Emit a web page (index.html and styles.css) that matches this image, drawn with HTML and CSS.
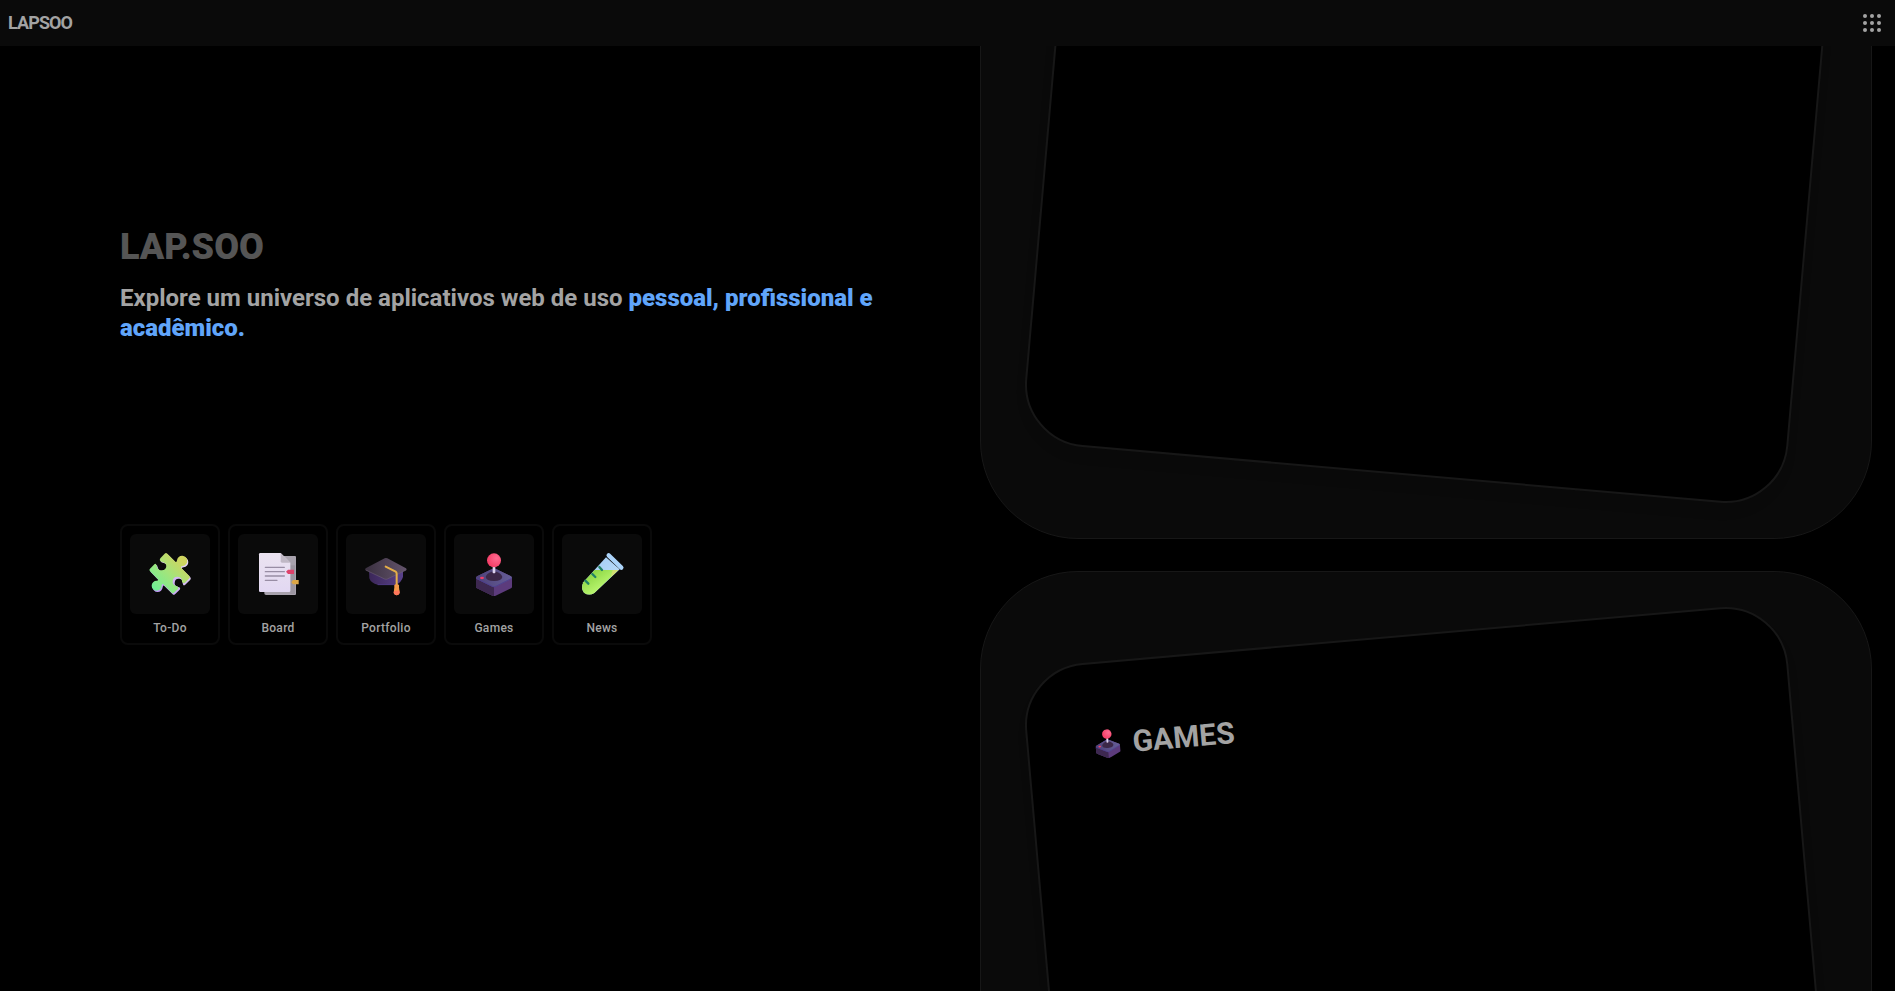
FILE: index.html
```html
<!DOCTYPE html>
<html lang="pt-BR">
<head>
<meta charset="utf-8">
<title>LAPSOO</title>
<link rel="stylesheet" href="styles.css">
</head>
<body>
<svg class="defs" width="0" height="0" aria-hidden="true">
  <defs>
    <linearGradient id="puzzle-fill" x1="0" y1="1" x2="1" y2="0"><stop offset="0" stop-color="#62f29d"/><stop offset=".5" stop-color="#a5e47a"/><stop offset=".8" stop-color="#cfd45f"/><stop offset="1" stop-color="#cfd45f"/></linearGradient>
    <linearGradient id="puzzle-side" x1="0" y1="1" x2="1" y2="0"><stop offset="0" stop-color="#b98cf5"/><stop offset="1" stop-color="#e9e0f0"/></linearGradient>
    <linearGradient id="paper" x1="0" y1="0" x2="0" y2="1"><stop offset="0" stop-color="#ebe3f0"/><stop offset="1" stop-color="#e2d8f2"/></linearGradient>
    <linearGradient id="cap-top" x1="0" y1="0" x2="1" y2="0"><stop offset="0" stop-color="#3a3040"/><stop offset="1" stop-color="#64546c"/></linearGradient>
    <linearGradient id="cap-base" x1="0" y1="0" x2="1" y2="0"><stop offset="0" stop-color="#3b2758"/><stop offset="1" stop-color="#59418a"/></linearGradient>
    <radialGradient id="ball" cx=".68" cy=".35" r=".7"><stop offset="0" stop-color="#ff6a90"/><stop offset="1" stop-color="#f53d66"/></radialGradient>
    <linearGradient id="stick-top" x1="0" y1="0" x2="1" y2="0"><stop offset="0" stop-color="#4d4279"/><stop offset="1" stop-color="#655d96"/></linearGradient>
    <linearGradient id="liquid" x1="0" y1="0" x2="1" y2="1"><stop offset="0" stop-color="#7dcb35"/><stop offset=".6" stop-color="#b5f36b"/><stop offset="1" stop-color="#d5e883"/></linearGradient>
    <linearGradient id="glass" x1="0" y1="0" x2="1" y2="1"><stop offset="0" stop-color="#9cc8f2"/><stop offset="1" stop-color="#c5e2fb"/></linearGradient>
    <symbol id="joystick" viewBox="0 -3 126 129">
      <path d="M9 71Q9 69 12 67L57 45Q63 42 69 45L114 67Q117 69 117 71V98Q117 101 114 103L68 125Q63 127 58 125L12 103Q9 101 9 98Z" fill="#5c3b7c"/>
      <path d="M9 74L63 100V126Q60 126 58 125L12 103Q9 101 9 98Z" fill="#3d2850"/>
      <path d="M12 67L57 45Q63 42 69 45L114 67Q119 71 114 75L68 98Q63 100 58 98L12 75Q7 71 12 67Z" fill="url(#stick-top)"/>
      <path d="M10 73L58 97Q63 100 68 97L116 73" fill="none" stroke="#4a3d90" stroke-width="2.5"/>
      <ellipse cx="27" cy="72" rx="6" ry="3.5" fill="#f13f68"/>
      <path d="M38 69Q40 58 56 53H70Q86 58 88 69Q86 81 63 81Q40 81 38 69Z" fill="#3c2848"/>
      <path d="M59 37H67V56Q63 59 59 56Z" fill="#ddd3ed"/>
      <circle cx="63" cy="19" r="21" fill="url(#ball)"/>
    </symbol>
  </defs>
</svg>

<header class="topbar">
  <span class="brand">LAPSOO</span>
  <svg class="apps" viewBox="0 0 24 24" fill="currentColor"><circle cx="5" cy="5" r="2"/><circle cx="12" cy="5" r="2"/><circle cx="19" cy="5" r="2"/><circle cx="5" cy="12" r="2"/><circle cx="12" cy="12" r="2"/><circle cx="19" cy="12" r="2"/><circle cx="5" cy="19" r="2"/><circle cx="12" cy="19" r="2"/><circle cx="19" cy="19" r="2"/></svg>
</header>

<main class="page">
  <section class="hero">
    <h1 class="title">LAP.SOO</h1>
    <p class="lead">Explore um universo de aplicativos web de uso <strong class="accent">pessoal, profissional e acadêmico.</strong></p>
    <nav class="tiles">
      <a class="tile"><span class="thumb"><svg class="icon" viewBox="0 0 126 126">
        <path transform="translate(3 4)" d="M47 2Q51 -2 55 2L79 26Q83 29 84 22A15.500 15.500 0 1 1 101 39Q93 40 97 45L121 69Q124 73 121 76L105 92Q99 96 98 87A12 12 0 1 0 83 97Q94 99 89 106L75 120Q71 123 68 120L43 95Q39 91 38 99A15 15 0 1 1 23 83Q31 82 26 78L2 53Q0 50 3 47L17 33Q21 30 23 38Q26 51 38 51Q51 50 51 38Q51 27 38 25Q29 23 34 16Z" fill="url(#puzzle-side)"/>
        <path d="M47 2Q51 -2 55 2L79 26Q83 29 84 22A15.500 15.500 0 1 1 101 39Q93 40 97 45L121 69Q124 73 121 76L108 89Q102 93 99 86A14 14 0 1 0 82 99Q91 102 87 108L75 119Q71 122 68 119L43 94Q39 90 38 98A15 15 0 1 1 23 83Q31 82 26 78L2 53Q0 50 3 47L17 33Q21 30 23 38Q26 52 38 52Q52 50 52 38Q51 29 39 27Q29 24 34 16Z" fill="url(#puzzle-fill)"/>
      </svg></span><span class="label">To-Do</span></a>
      <a class="tile"><span class="thumb"><svg class="icon" viewBox="0 0 126 126">
        <path d="M24 9H114Q117 9 117 12V123Q117 126 114 126H27Q22 126 22 121Z" fill="#a8a2ad"/>
        <path d="M100 37H114V123H100Z" fill="#8e8894" opacity=".5"/>
        <path d="M10 0H71L100 29V113Q100 117 96 117H10Q6 117 6 113V4Q6 0 10 0Z" fill="url(#paper)"/>
        <path d="M71 0L100 29H75Q71 29 71 25Z" fill="#c0b8c5"/>
        <path d="M25 43H82M25 56H82M25 69H82M25 82H60" stroke="#988da4" stroke-width="4" stroke-linecap="round"/>
        <path d="M87 56L93 50H111V63H93Z" fill="#de426b"/>
        <path d="M103 88L108 81H125V94H108Z" fill="#dca645"/>
      </svg></span><span class="label">Board</span></a>
      <a class="tile"><span class="thumb"><svg class="icon" viewBox="0 0 126 126">
        <path d="M12 54H114V71Q110 88 92 95H38Q18 91 13 76Z" fill="url(#cap-base)"/>
        <path d="M38 95H92" stroke="#5c46a0" stroke-width="2"/>
        <path d="M2 46L59 16Q63 14 67 16L123 46Q127 49 123 52L67 78Q63 80 59 78L2 52Q-1 49 2 46Z" fill="url(#cap-top)"/>
        <path d="M2 51L59 78Q63 80 67 78L124 51" fill="none" stroke="#74647c" stroke-width="1.5"/>
        <path d="M62 41L92 56Q95 58 95 62V95" fill="none" stroke="#e5ae48" stroke-width="6" stroke-linecap="round"/>
        <path d="M91 94H99Q104 95 102 103L104 120Q101 127 95 127Q89 127 86 120L88 103Q86 95 91 94Z" fill="#f59a49"/>
        <path d="M87 114L103 112L104 120Q101 127 95 127Q89 127 86 120Z" fill="#ff765b"/>
      </svg></span><span class="label">Portfolio</span></a>
      <a class="tile"><span class="thumb"><svg class="icon joy"><use href="#joystick"/></svg></span><span class="label">Games</span></a>
      <a class="tile"><span class="thumb"><svg class="icon" viewBox="0 0 126 126">
        <path d="M75 13L116 49L40 120Q24 130 9 119Q-2 106 7 88Z" fill="url(#glass)"/>
        <path d="M41 51H112L40 120Q24 130 9 119Q-2 106 7 88Z" fill="url(#liquid)"/>
        <path d="M95 51H112L89 73Z" fill="#e2dc77" opacity=".7"/>
        <path d="M83 7L121 44" stroke="#acd4fa" stroke-width="13" stroke-linecap="round"/>
        <path d="M55 42L63 51M34 63L43 72M13 83L22 92" stroke="#218264" stroke-width="7" stroke-linecap="round"/>
      </svg></span><span class="label">News</span></a>
    </nav>
  </section>

  <section class="showcase">
    <article class="panel"><div class="card card-right"></div></article>
    <article class="panel"><div class="card card-left">
      <h2 class="card-title"><svg class="card-icon"><use href="#joystick"/></svg>GAMES</h2>
    </div></article>
  </section>
</main>
</body>
</html>
```
FILE: styles.css
```css
* { box-sizing: border-box; }

body {
  margin: 0;
  height: 100vh;
  display: flex;
  flex-direction: column;
  overflow: hidden;
  background: #000;
  color: #a3a3a3;
  font-family: Roboto, "Liberation Sans", sans-serif;
}

.defs { position: absolute; }

.topbar {
  flex: none;
  height: 46px;
  padding: 0 11px 0 8px;
  display: flex;
  align-items: center;
  justify-content: space-between;
  background: #0a0a0a;
}

.brand {
  padding-bottom: 2px;
  font-size: 18px;
  font-weight: 700;
  letter-spacing: -0.05em;
}

.apps { width: 24px; height: 24px; display: block; }

.page {
  flex: 1;
  min-height: 0;
  display: grid;
  grid-template-columns: 980px 891.5px;
  overflow: hidden;
}

.hero { padding: 181px 80px 0 120px; }

.title {
  margin: 0 0 16px;
  font-size: 36px;
  line-height: 40px;
  font-weight: 900;
  color: #555;
}

.lead {
  margin: 0;
  font-size: 24px;
  line-height: 30px;
  font-weight: 700;
}

.accent { font-weight: 900; color: #60a5fa; }

.tiles {
  margin-top: 181px;
  display: flex;
  gap: 8px;
}

.tile {
  width: 100px;
  height: 121px;
  padding: 8px 8px 0;
  display: flex;
  flex-direction: column;
  align-items: center;
  border: 2px solid #0a0a0a;
  border-radius: 8px;
}

.thumb {
  flex: none;
  width: 80px;
  height: 80px;
  display: grid;
  place-items: center;
  border-radius: 6px;
  background: #0a0a0a;
}

.icon { width: 42px; height: 42px; display: block; overflow: visible; }
.joy { height: 43px; }

.label {
  margin-top: 6px;
  font-size: 12px;
  line-height: 16px;
  font-weight: 500;
  letter-spacing: 0.025em;
}

.showcase {
  margin-top: -200px;
  display: flex;
  flex-direction: column;
  gap: 32px;
}

.panel {
  flex: none;
  height: 693px;
  padding: 62px;
  display: flex;
  border: 1px solid #171717;
  border-radius: 98px;
  background: #0a0a0a;
}

.card {
  flex: 1;
  padding: 63px 64px;
  border: 2px solid #171717;
  border-radius: 63px;
  background: #000;
  box-shadow: 0 10px 15px -3px rgba(0, 0, 0, 0.06);
}

.card-right { transform: rotate(5deg); }
.card-left { transform: rotate(-5deg); }

.card-title {
  margin: 0;
  display: flex;
  align-items: center;
  gap: 10px;
  font-size: 30px;
  line-height: 36px;
  font-weight: 700;
}

.card-icon { width: 30px; height: 29px; margin-bottom: 2px; }
```
